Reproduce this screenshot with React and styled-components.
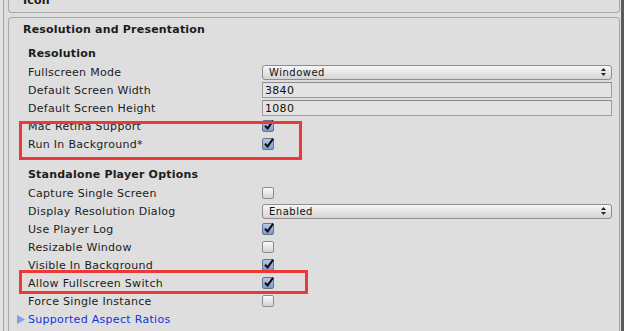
import React from 'react';
import styled, { createGlobalStyle } from 'styled-components';

const GlobalStyle = createGlobalStyle`
  html, body {
    margin: 0;
    padding: 0;
    background: #dedede;
    overflow: hidden;
  }
  body {
    font-family: "DejaVu Sans", Verdana, sans-serif;
    font-size: 11px;
    color: #1c1c1c;
  }
`;

const Frame = styled.div`
  display: flex;
  width: 624px;
  height: 331px;
  overflow: hidden;
  background: #dedede;
`;

const Rail = styled.div`
  width: 3px;
  flex: none;
  background: #e2e2e2;
  border-right: 1px solid #a3a3a3;
`;

const Column = styled.div`
  flex: 1;
  display: flex;
  flex-direction: column;
  gap: 4px;
  padding-left: 4px;
`;

const ScrollEdge = styled.div`
  width: 3px;
  flex: none;
  margin-left: 1px;
  background: #5a5a5a;
`;

const IconBox = styled.div`
  height: 13px;
  box-sizing: border-box;
  border: 1px solid #a8a8a8;
  border-top: none;
  border-radius: 0 0 4px 4px;
  overflow: hidden;
  padding-left: 14px;
`;

const IconTitle = styled.div`
  font-weight: bold;
  letter-spacing: 0.2px;
  line-height: 14px;
  margin-top: -6px;
`;

const Box = styled.div`
  position: relative;
  flex: 1;
  border: 1px solid #a8a8a8;
  border-bottom: none;
  border-radius: 4px 4px 0 0;
  padding: 2px 7px 0 14px;
`;

const Title = styled.div`
  font-weight: bold;
  letter-spacing: 0.2px;
  line-height: 20px;
`;

const Heading = styled.div`
  font-weight: bold;
  letter-spacing: 0.2px;
  line-height: 18px;
  padding-left: 5px;
  margin-top: ${(p) => p.$top}px;
  margin-bottom: ${(p) => p.$bottom}px;
`;

const Row = styled.div`
  display: flex;
  align-items: center;
  height: 18px;
  padding-left: 5px;
`;

const Label = styled.div`
  width: 234px;
  flex: none;
  white-space: nowrap;
  letter-spacing: 0.3px;
`;

const Popup = styled.div`
  width: 350px;
  height: 15px;
  box-sizing: border-box;
  display: flex;
  align-items: center;
  justify-content: space-between;
  padding: 0 5px 0 6px;
  border: 1px solid #8e8e8e;
  border-radius: 3px;
  background: linear-gradient(#f7f7f7, #e2e2e2 60%, #d4d4d4);
  font-size: 10px;
  letter-spacing: 0.5px;
  color: #111;
`;

const Field = styled.div`
  width: 350px;
  height: 16px;
  box-sizing: border-box;
  display: flex;
  align-items: center;
  padding-left: 2px;
  border: 1px solid #9c9c9c;
  border-top-color: #8a8a8a;
  background: #e3e3e3;
  letter-spacing: 0.3px;
  color: #111;
`;

const Check = styled.div`
  position: relative;
  width: 12px;
  height: 12px;
  box-sizing: border-box;
  border-radius: 2px;
  border: 1px solid ${(p) => (p.$on ? '#66748c' : '#8d8d8d')};
  background: ${(p) =>
    p.$on
      ? 'linear-gradient(#b4c8e8, #7d9acb)'
      : 'linear-gradient(#fbfbfb, #d2d2d2)'};
`;

const Tick = styled.svg`
  position: absolute;
  left: 0;
  top: -2px;
`;

const Foldout = styled.div`
  display: flex;
  align-items: center;
  gap: 3px;
  height: 18px;
  margin-left: -6px;
  letter-spacing: 0.3px;
  color: #1133dd;
`;

const Mark = styled.div`
  position: absolute;
  left: 10px;
  top: ${(p) => p.$top}px;
  width: ${(p) => p.$w}px;
  height: ${(p) => p.$h}px;
  box-sizing: border-box;
  border: 3px solid #ee3838;
`;

const Arrows = () => (
  <svg width="5" height="8" viewBox="0 0 5 8">
    <path d="M2.5 0 L5 3 L0 3 Z" fill="#222" />
    <path d="M0 5 L5 5 L2.5 8 Z" fill="#222" />
  </svg>
);

const CheckBox = ({ on }) => (
  <Check $on={on}>
    {on && (
      <Tick width="12" height="12" viewBox="0 0 12 12">
        <path
          d="M2 6.8 L4.6 9.4 L10.2 1.6"
          fill="none"
          stroke="#0d0d0d"
          strokeWidth="2"
        />
      </Tick>
    )}
  </Check>
);

const Toggle = ({ label, on }) => (
  <Row>
    <Label>{label}</Label>
    <CheckBox on={on} />
  </Row>
);

export default function App() {
  return (
    <>
      <GlobalStyle />
      <Frame>
        <Rail />
        <Column>
          <IconBox>
            <IconTitle>Icon</IconTitle>
          </IconBox>
          <Box>
            <Title>Resolution and Presentation</Title>
            <Heading $top={5} $bottom={0}>Resolution</Heading>
            <Row>
              <Label>Fullscreen Mode</Label>
              <Popup>
                <span>Windowed</span>
                <Arrows />
              </Popup>
            </Row>
            <Row>
              <Label>Default Screen Width</Label>
              <Field>3840</Field>
            </Row>
            <Row>
              <Label>Default Screen Height</Label>
              <Field>1080</Field>
            </Row>
            <Toggle label="Mac Retina Support" on />
            <Toggle label="Run In Background*" on />
            <Heading $top={13} $bottom={0}>Standalone Player Options</Heading>
            <Toggle label="Capture Single Screen" />
            <Row>
              <Label>Display Resolution Dialog</Label>
              <Popup>
                <span>Enabled</span>
                <Arrows />
              </Popup>
            </Row>
            <Toggle label="Use Player Log" on />
            <Toggle label="Resizable Window" />
            <Toggle label="Visible In Background" on />
            <Toggle label="Allow Fullscreen Switch" on />
            <Toggle label="Force Single Instance" />
            <Foldout>
              <svg width="8" height="9" viewBox="0 0 8 9">
                <path d="M0 0 L8 4.5 L0 9 Z" fill="#7f9ee6" />
              </svg>
              <span>Supported Aspect Ratios</span>
            </Foldout>
            <Mark $top={103} $w={283} $h={39} />
            <Mark $top={252} $w={289} $h={24} />
          </Box>
        </Column>
        <ScrollEdge />
      </Frame>
    </>
  );
}
